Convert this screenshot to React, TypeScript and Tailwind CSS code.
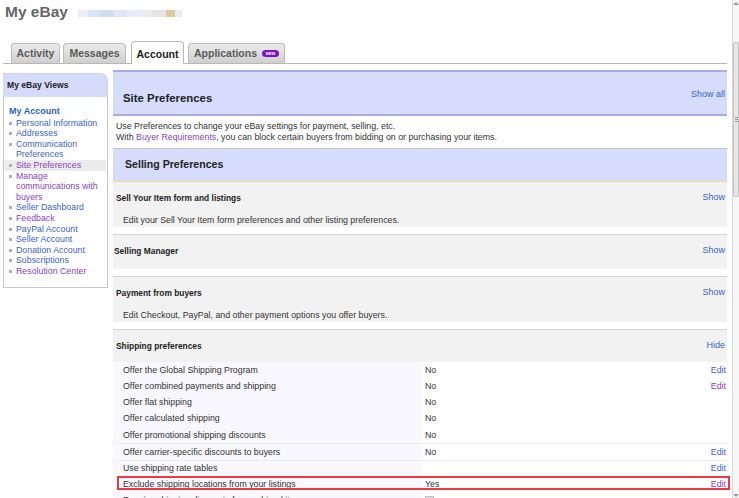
import React from 'react';

const BLUE = 'text-[#3b64c8]';
const PURPLE = 'text-[#8c3fc4]';

const sideLinks: {label: string; visited?: boolean; current?: boolean}[] = [
	{label: 'Personal Information'},
	{label: 'Addresses'},
	{label: 'Communication Preferences'},
	{label: 'Site Preferences', visited: true, current: true},
	{label: 'Manage communications with buyers', visited: true},
	{label: 'Seller Dashboard'},
	{label: 'Feedback', visited: true},
	{label: 'PayPal Account'},
	{label: 'Seller Account'},
	{label: 'Donation Account'},
	{label: 'Subscriptions'},
	{label: 'Resolution Center', visited: true},
];

const shippingRows: {
	label: string;
	value: string;
	edit?: 'blue' | 'purple';
	sep?: boolean;
	flagged?: boolean;
}[] = [
	{label: 'Offer the Global Shipping Program', value: 'No', edit: 'blue'},
	{label: 'Offer combined payments and shipping', value: 'No', edit: 'purple'},
	{label: 'Offer flat shipping', value: 'No'},
	{label: 'Offer calculated shipping', value: 'No'},
	{label: 'Offer promotional shipping discounts', value: 'No'},
	{label: 'Offer carrier-specific discounts to buyers', value: 'No', edit: 'blue', sep: true},
	{label: 'Use shipping rate tables', value: '', edit: 'blue', sep: true},
	{label: 'Exclude shipping locations from your listings', value: 'Yes', edit: 'purple', flagged: true},
	{label: 'Receive shipping discounts for combined items', value: ''},
];

function Tab({label, width, active, badge}: {label: string; width: string; active?: boolean; badge?: boolean}) {
	if (active) {
		return (
			<div
				className={`${width} h-[23px] -mb-px bg-white border border-b-0 border-[#b8b8b8] rounded-t-[4px] flex items-center justify-center pt-[3px] text-[10.5px] font-bold text-[#222]`}
			>
				{label}
			</div>
		);
	}
	return (
		<div
			className={`${width} h-[20px] bg-gradient-to-b from-[#ececec] to-[#cfcfcf] border border-b-0 border-[#bdbdbd] rounded-t-[4px] flex items-center justify-center gap-[5px] text-[10.5px] font-bold text-[#5a5a5a]`}
		>
			{label}
			{badge && (
				<span className="h-[7px] w-[17px] rounded-full bg-[#7a12c8] text-white text-[4px] leading-[7px] font-bold text-center">
					NEW
				</span>
			)}
		</div>
	);
}

function Section({
	title,
	desc,
	action,
	first,
	flushTitle,
	height,
}: {
	title: string;
	desc?: string;
	action: string;
	first?: boolean;
	flushTitle?: boolean;
	height: string;
}) {
	return (
		<div className={first ? '' : 'mt-[7px] border-t border-[#d2d2d2]'}>
			<div className={`${height} bg-[#f2f2f2] flex flex-col`}>
				<div className="flex items-center justify-between h-[32px] shrink-0 pr-[2px]">
					<span className={`${flushTitle ? 'pl-[1px]' : 'pl-[3px]'} text-[8.4px] font-bold text-[#222]`}>{title}</span>
					<span className={`${BLUE} text-[9px]`}>{action}</span>
				</div>
				{desc && <div className="pl-[10px] text-[8.8px] leading-[10px] text-[#333] mt-[1px]">{desc}</div>}
			</div>
		</div>
	);
}

export default function App() {
	return (
		<div className="w-[739px] h-[498px] overflow-hidden bg-white flex font-['Liberation_Sans',Arial,sans-serif]">
			<div className="w-[732px] shrink-0">
				{/* Title */}
				<div className="h-[22px] flex items-center pl-[5px] pt-[1px]">
					<span className="text-[15.5px] font-bold text-[#666] leading-none">My eBay</span>
					<div className="ml-[10px] mt-[3px] flex h-[7px]">
						<div className="w-[10px] bg-[#e9eef7]" />
						<div className="w-[12px] bg-[#dbe5f4]" />
						<div className="w-[14px] bg-[#d2ddf1]" />
						<div className="w-[12px] bg-[#dfe7f5]" />
						<div className="w-[16px] bg-[#e6edf8]" />
						<div className="w-[10px] bg-[#ececec]" />
						<div className="w-[14px] bg-[#e5e5e5]" />
						<div className="w-[9px] bg-[#d9cc92]" />
						<div className="w-[7px] bg-[#ececec]" />
					</div>
				</div>

				{/* Tabs */}
				<div className="ml-[3px] w-[724px] h-[42px] border-b border-[#b8b8b8] flex items-end pl-[8px]">
					<Tab label="Activity" width="w-[49px]" />
					<div className="w-[3px]" />
					<Tab label="Messages" width="w-[63px]" />
					<div className="w-[5px]" />
					<Tab label="Account" width="w-[53px]" active />
					<div className="w-[4px]" />
					<Tab label="Applications" width="w-[97px]" badge />
				</div>

				<div className="flex mt-[6px]">
					{/* Sidebar */}
					<div className="ml-[3px] w-[105px] mt-[3px] self-start">
						<div className="h-[24px] bg-[#d5dcfb] border-t border-r border-[#cdd2ee] rounded-tr-[8px] flex items-center pl-[4px] text-[8.6px] font-bold text-[#222]">
							My eBay Views
						</div>
						<div className="border-x border-b border-[#c9c9c9] pb-[10px] pt-[9px] text-[8.8px] leading-[10.6px]">
							<div className="pl-[5px] font-bold text-[#2d5ec2] text-[9px]">My Account</div>
							<div className="mt-[1px]">
								{sideLinks.map(l => (
									<div key={l.label} className={`flex ${l.current ? 'bg-[#ececec] mr-[1px]' : ''}`}>
										<div className="w-[8px] pl-[5px] pt-[4px]">
											<div className="w-[3px] h-[3px] bg-[#b0b0b0]" />
										</div>
										<div className={`pl-[4px] w-[90px] ${l.visited ? PURPLE : BLUE}`}>{l.label}</div>
									</div>
								))}
							</div>
						</div>
					</div>

					{/* Main */}
					<div className="ml-[5px] w-[614px]">
						<div className="h-[46px] bg-[#d5dcfc] border-t-2 border-b-2 border-[#a9acdc] flex justify-between">
							<span className="mt-[18px] pl-[10px] text-[11.4px] font-bold text-[#222]">Site Preferences</span>
							<span className={`mt-[16px] pr-[2px] text-[9px] ${BLUE}`}>Show all</span>
						</div>
						<div className="h-[33px] border-b border-[#c4c4c4] pt-[5px] pl-[3px] text-[8.8px] leading-[10.5px] text-[#333]">
							<div>Use Preferences to change your eBay settings for payment, selling, etc.</div>
							<div>
								With <span className={PURPLE}>Buyer Requirements</span>, you can block certain buyers from bidding on or
								purchasing your items.
							</div>
						</div>
						<div className="h-[33px] bg-[#d5dcfc] border-b border-[#f2d98a] flex items-center pl-[12px] text-[10.6px] font-bold text-[#222]">
							Selling Preferences
						</div>

						<Section
							first
							height="h-[45px]"
							title="Sell Your Item form and listings"
							desc="Edit your Sell Your Item form preferences and other listing preferences."
							action="Show"
						/>
						<Section flushTitle height="h-[34px]" title="Selling Manager" action="Show" />
						<Section
							height="h-[45px]"
							title="Payment from buyers"
							desc="Edit Checkout, PayPal, and other payment options you offer buyers."
							action="Show"
						/>
						<Section height="h-[32px]" title="Shipping preferences" action="Hide" />

						<div className="text-[8.8px] text-[#333]">
							{shippingRows.map(r => (
								<div
									key={r.label}
									className={`relative h-[16.3px] flex ${r.sep ? 'border-t border-[#ececec]' : ''}`}
								>
									<div className="w-[309px] bg-[#f8f8fe] pl-[10px] flex items-center">{r.label}</div>
									<div className="flex-1 pl-[3px] flex items-center justify-between pr-[1px]">
										<span>
											{r.value}
											{!r.value && !r.edit && (
												<span className="inline-block w-[9px] h-[9px] mt-[5px] border border-[#bbb] bg-[#e6e6e6]" />
											)}
										</span>
										{r.edit && <span className={r.edit === 'blue' ? BLUE : PURPLE}>Edit</span>}
									</div>
									{r.flagged && (
										<div className="absolute left-[4px] -right-[3px] top-0 bottom-[2px] border-2 border-[#ec3a42]" />
									)}
								</div>
							))}
						</div>
					</div>
				</div>
			</div>

			{/* Scrollbar */}
			<div className="w-[7px] border-l border-[#dadada] bg-[#f6f6f6] flex flex-col items-center">
				<div className="mt-[2px] w-0 h-0 border-x-[3px] border-x-transparent border-b-[3px] border-b-[#9a9a9a]" />
				<div className="mt-[37px] w-[6px] h-[155px] rounded-[2px] bg-[#e8e8e8] border border-[#c4c4c4] flex items-center justify-center">
					<div className="flex flex-col gap-[1px]">
						<div className="w-[3px] h-px bg-[#999]" />
						<div className="w-[3px] h-px bg-[#999]" />
						<div className="w-[3px] h-px bg-[#999]" />
					</div>
				</div>
				<div className="mt-auto mb-[1px] w-0 h-0 border-x-[3px] border-x-transparent border-t-[3px] border-t-[#9a9a9a]" />
			</div>
		</div>
	);
}
